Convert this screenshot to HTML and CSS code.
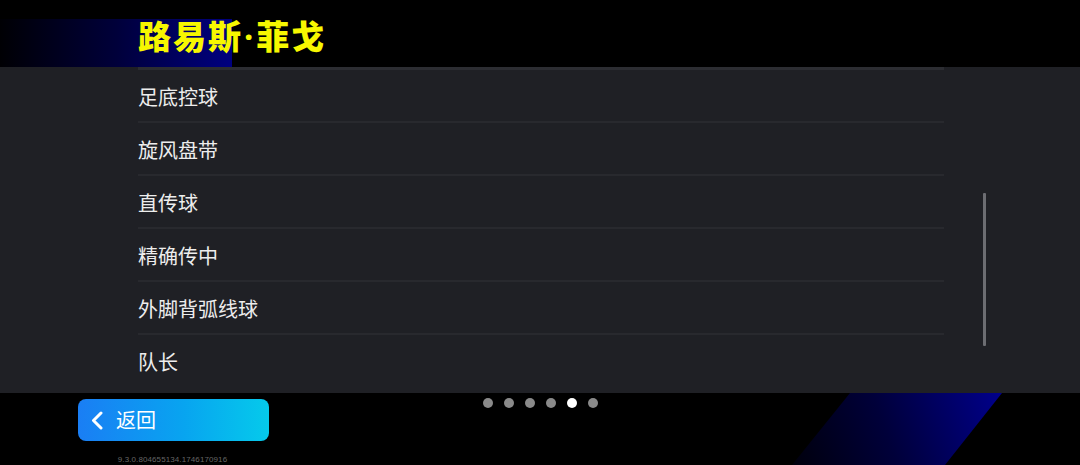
FILE: index.html
```html
<!DOCTYPE html>
<html>
<head lang="zh">
    <meta charset="UTF-8">
    <title>路易斯·菲戈</title>
    <link rel="stylesheet" href="styles.css">
</head>
<body>
<div class="head">
    <h1 class="title">路易斯<span class="dot">·</span>菲戈</h1>
</div>
<div class="panel">
    <ul class="list">
        <li>足底控球</li>
        <li>旋风盘带</li>
        <li>直传球</li>
        <li>精确传中</li>
        <li>外脚背弧线球</li>
        <li>队长</li>
    </ul>
    <div class="bar"></div>
</div>
<div class="foot">
    <div class="left">
        <a class="back" href="#">
            <svg class="chev" width="12" height="19" viewBox="0 0 12 19">
                <polyline points="10,2 2.5,9.5 10,17" fill="none" stroke="#fff" stroke-width="3" stroke-linecap="round" stroke-linejoin="round"/>
            </svg>
            <span>返回</span>
        </a>
        <p class="ver">9.3.0.804655134.1746170916</p>
    </div>
    <ul class="dots">
        <li></li>
        <li></li>
        <li></li>
        <li></li>
        <li class="on"></li>
        <li></li>
    </ul>
    <div></div>
</div>
</body>
</html>
```

FILE: styles.css
```css
*{
    margin: 0;
    padding: 0;
    list-style: none;
    box-sizing: border-box;
}
body{
    width: 1080px;
    height: 465px;
    overflow: hidden;
    background: #000;
    font-family: "Noto Sans CJK SC", "Noto Sans", sans-serif;
    color: #ededed;
}
.head{
    height: 67px;
    padding: 15px 0 0 138px;
    background: linear-gradient(to right, #000004, #00003a 50%, #000080) 0 19px / 232px 48px no-repeat, #000;
}
.title{
    font-size: 33px;
    line-height: 40px;
    font-weight: 900;
    letter-spacing: 2px;
    color: #f7f700;
}
.title .dot{
    font-family: "Noto Sans", sans-serif;
    font-weight: 700;
    margin: 0 1px 0 1px;
}
.panel{
    height: 326px;
    background: #1f2025;
    display: flex;
    padding-left: 138px;
}
.list{
    width: 806px;
    border-top: 3px solid #2c2d32;
}
.list li{
    height: 53px;
    border-bottom: 2px solid #28292e;
    font-size: 20px;
    line-height: 53px;
}
.list li:last-child{
    border-bottom: 0;
}
.bar{
    width: 3px;
    height: 153px;
    margin: 126px 0 0 39px;
    background: #6c6d72;
    border-radius: 1px;
}
.foot{
    height: 72px;
    position: relative;
    display: grid;
    grid-template-columns: 1fr auto 1fr;
}
.foot:before{
    content: "";
    position: absolute;
    left: 792px;
    top: 0;
    width: 210px;
    height: 72px;
    background: linear-gradient(70deg, #00000c, #00003a 45%, #00008c);
    clip-path: polygon(58px 0, 210px 0, 153px 100%, 0 100%);
}
.left{
    width: 269px;
    padding: 6px 0 0 78px;
    display: flex;
    flex-direction: column;
    align-items: center;
}
.back{
    width: 191px;
    height: 42px;
    border-radius: 8px;
    background: linear-gradient(to right, #1a7ef4, #08a4f0 55%, #05caeb);
    display: flex;
    align-items: center;
    padding-left: 13px;
    gap: 13px;
    text-decoration: none;
    color: #fff;
    font-size: 20px;
}
.back span{
    line-height: 42px;
}
.ver{
    margin-top: 14px;
    font-size: 8px;
    line-height: 10px;
    color: #666;
    font-family: "Liberation Sans", sans-serif;
    letter-spacing: 0.1px;
    padding-right: 2px;
}
.dots{
    display: flex;
    gap: 11px;
    padding-top: 5px;
    position: relative;
}
.dots li{
    width: 10px;
    height: 10px;
    border-radius: 50%;
    background: #8a8a8a;
}
.dots li.on{
    background: #fff;
}
```
